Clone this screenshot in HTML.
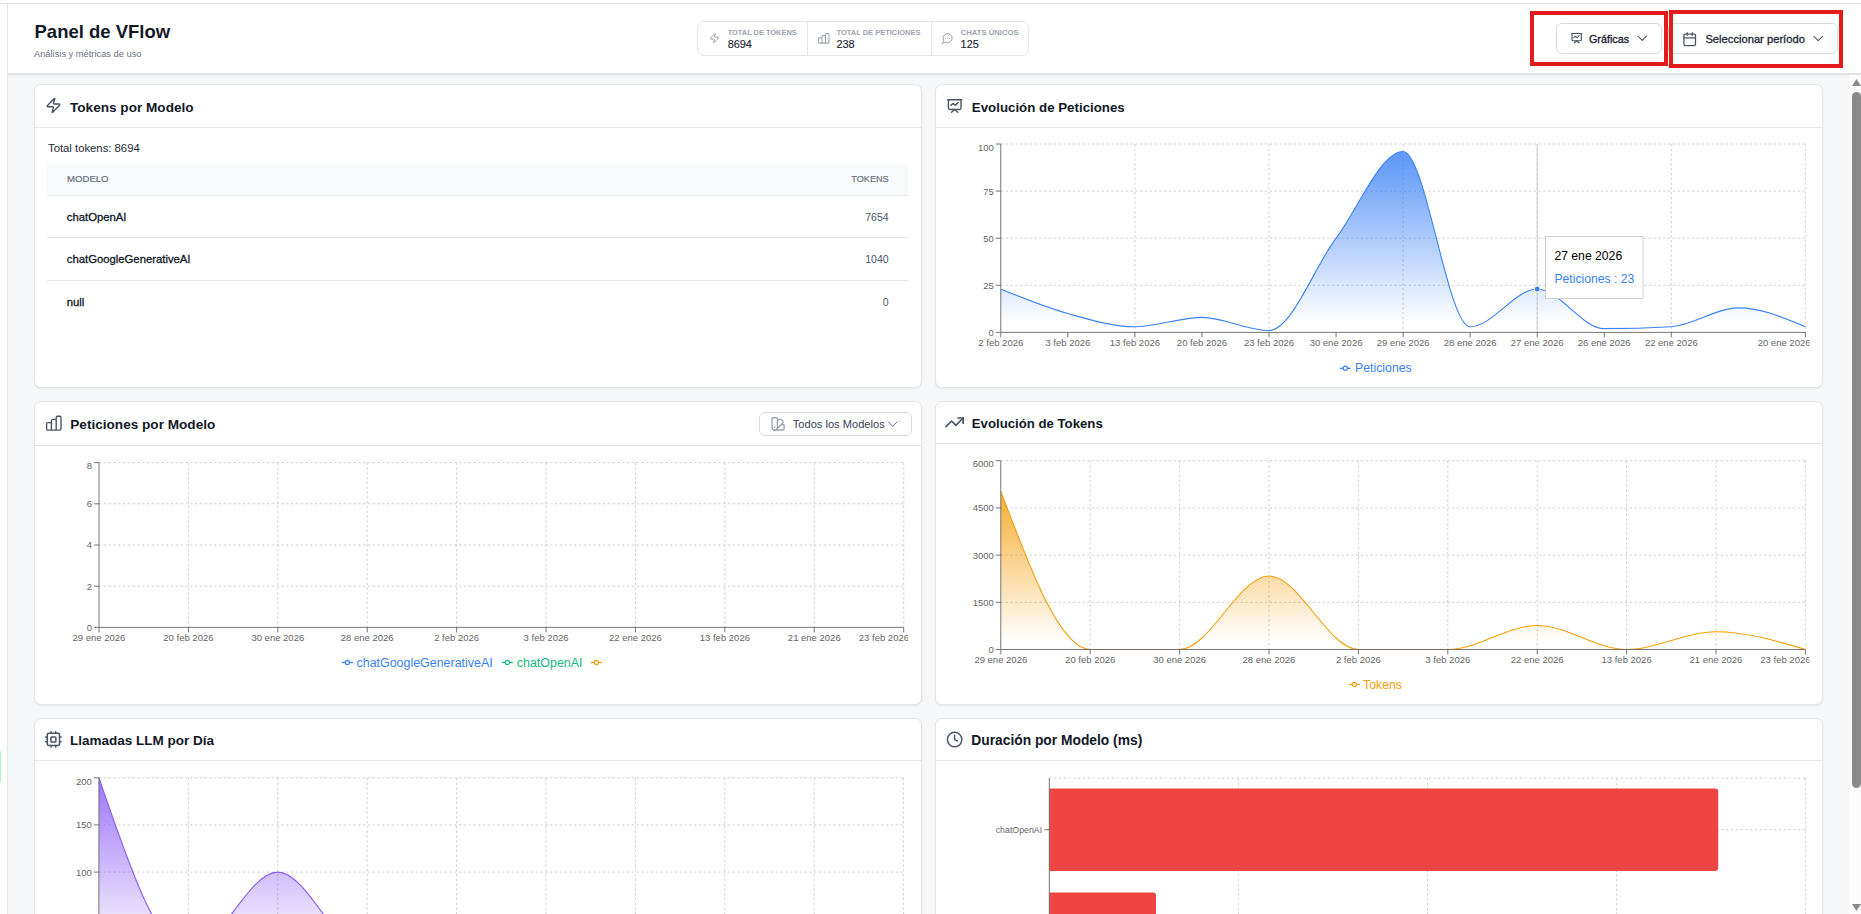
<!DOCTYPE html>
<html><head><meta charset="utf-8"><title>Panel de VFlow</title>
<style>
html,body{margin:0;padding:0;}
body{width:1861px;height:914px;overflow:hidden;position:relative;background:#fff;font-family:"Liberation Sans", sans-serif;}
svg text{font-family:"Liberation Sans", sans-serif;}
</style></head><body>
<div style="position:absolute;left:0px;top:3px;width:1861px;height:1px;background:#e2e4e2"></div><div style="position:absolute;left:7px;top:4px;width:1px;height:910px;background:#e5e7eb"></div><div style="position:absolute;left:8px;top:4px;width:1853px;height:70px;background:#fff"></div><div style="position:absolute;left:8px;top:74px;width:1841px;height:840px;background:#f6f7f9"></div><div style="position:absolute;left:8px;top:73px;width:1853px;height:2px;background:#e1e2e4"></div><div style="position:absolute;left:8px;top:75px;width:1841px;height:2px;background:linear-gradient(#eceef0,#f6f7f9)"></div><div style="position:absolute;left:0px;top:751px;width:1px;height:31px;background:#b0f5c8"></div><div style="position:absolute;left:1849px;top:75px;width:12px;height:839px;background:#fbfbfb"></div><div style="position:absolute;left:1852px;top:92px;width:9px;height:696px;background:#8a8a8a;border-radius:4.5px"></div><div style="position:absolute;left:697px;top:21px;width:332px;height:35px;border:1px solid #e3e5e8;border-radius:7px;box-sizing:border-box;background:#fff"></div><div style="position:absolute;left:807px;top:22px;width:1px;height:33px;background:#e3e5e8"></div><div style="position:absolute;left:931px;top:22px;width:1px;height:33px;background:#e3e5e8"></div><div style="position:absolute;left:1556px;top:23px;width:106px;height:31px;border:1px solid #d8dbe0;border-radius:6px;box-sizing:border-box;background:#fff"></div><div style="position:absolute;left:1668px;top:23px;width:170px;height:31px;border:1px solid #d8dbe0;border-radius:6px;box-sizing:border-box;background:#fff"></div><div style="position:absolute;left:1530px;top:11px;width:138px;height:55px;border:4px solid #e31b1b;box-sizing:border-box"></div><div style="position:absolute;left:1669px;top:10px;width:174px;height:58px;border:4px solid #e31b1b;box-sizing:border-box"></div><div style="position:absolute;left:34px;top:84px;width:888px;height:304px;background:#fff;border:1px solid #e3e5e8;border-radius:7px;box-sizing:border-box;box-shadow:0 1px 2px rgba(0,0,0,0.07)"></div><div style="position:absolute;left:35px;top:127px;width:886px;height:1px;background:#e5e7eb"></div><div style="position:absolute;left:935px;top:84px;width:888px;height:304px;background:#fff;border:1px solid #e3e5e8;border-radius:7px;box-sizing:border-box;box-shadow:0 1px 2px rgba(0,0,0,0.07)"></div><div style="position:absolute;left:936px;top:127px;width:886px;height:1px;background:#e5e7eb"></div><div style="position:absolute;left:34px;top:401px;width:888px;height:304px;background:#fff;border:1px solid #e3e5e8;border-radius:7px;box-sizing:border-box;box-shadow:0 1px 2px rgba(0,0,0,0.07)"></div><div style="position:absolute;left:35px;top:445px;width:886px;height:1px;background:#e5e7eb"></div><div style="position:absolute;left:935px;top:401px;width:888px;height:304px;background:#fff;border:1px solid #e3e5e8;border-radius:7px;box-sizing:border-box;box-shadow:0 1px 2px rgba(0,0,0,0.07)"></div><div style="position:absolute;left:936px;top:443px;width:886px;height:1px;background:#e5e7eb"></div><div style="position:absolute;left:34px;top:718px;width:888px;height:400px;background:#fff;border:1px solid #e3e5e8;border-radius:7px;box-sizing:border-box;box-shadow:0 1px 2px rgba(0,0,0,0.07)"></div><div style="position:absolute;left:35px;top:760px;width:886px;height:1px;background:#e5e7eb"></div><div style="position:absolute;left:935px;top:718px;width:888px;height:400px;background:#fff;border:1px solid #e3e5e8;border-radius:7px;box-sizing:border-box;box-shadow:0 1px 2px rgba(0,0,0,0.07)"></div><div style="position:absolute;left:936px;top:760px;width:886px;height:1px;background:#e5e7eb"></div><div style="position:absolute;left:47px;top:163px;width:861px;height:32px;background:#f9fafb"></div><div style="position:absolute;left:47px;top:195px;width:861px;height:1px;background:#e5e7eb"></div><div style="position:absolute;left:47px;top:237px;width:861px;height:1px;background:#e5e7eb"></div><div style="position:absolute;left:47px;top:280px;width:861px;height:1px;background:#e5e7eb"></div><div style="position:absolute;left:759px;top:411.5px;width:152.5px;height:24.5px;border:1px solid #d8dbe0;border-radius:6px;box-sizing:border-box;background:#fff"></div>
<svg width="1861" height="914" viewBox="0 0 1861 914" style="position:absolute;left:0;top:0">
<path d="M1852,86 L1856.5,79 L1861,86 Z" fill="#8a8a8a"/><path d="M1852,904 L1856.5,911 L1861,904 Z" fill="#8a8a8a"/><text x="34.5" y="38.2" font-size="18.5" fill="#111827" font-weight="700" text-anchor="start">Panel de VFlow</text><text x="34" y="57" font-size="9.3" fill="#6b7280" font-weight="400" text-anchor="start">Análisis y métricas de uso</text><text x="727.7" y="34.8" font-size="7.45" fill="#9ca3af" font-weight="700" text-anchor="start" textLength="69" lengthAdjust="spacingAndGlyphs">TOTAL DE TOKENS</text><text x="727.7" y="47.9" font-size="10.9" fill="#1f2937" font-weight="400" text-anchor="start" stroke="#1f2937" stroke-width="0.15">8694</text><text x="836.5" y="34.8" font-size="7.45" fill="#9ca3af" font-weight="700" text-anchor="start" textLength="84" lengthAdjust="spacingAndGlyphs">TOTAL DE PETICIONES</text><text x="836.5" y="47.9" font-size="10.9" fill="#1f2937" font-weight="400" text-anchor="start" stroke="#1f2937" stroke-width="0.15">238</text><text x="960.6" y="34.8" font-size="7.45" fill="#9ca3af" font-weight="700" text-anchor="start" textLength="58" lengthAdjust="spacingAndGlyphs">CHATS ÚNICOS</text><text x="960.6" y="47.9" font-size="10.9" fill="#1f2937" font-weight="400" text-anchor="start" stroke="#1f2937" stroke-width="0.15">125</text><g transform="translate(708.8,32.4) scale(0.4750)" fill="none" stroke="#9ca3af" stroke-width="2.1" stroke-linecap="round" stroke-linejoin="round"><path d="M4 14a1 1 0 0 1-.78-1.63l9.9-10.2a.5.5 0 0 1 .86.46l-1.92 6.02A1 1 0 0 0 13 10h7a1 1 0 0 1 .78 1.63l-9.9 10.2a.5.5 0 0 1-.86-.46l1.92-6.02A1 1 0 0 0 11 14z"/></g><path d="M818.6,42.2V38.7Q818.6,37.8 819.5,37.8H822.05M822.05,43.1V36.5Q822.05,35.6 822.95,35.6H824.6Q825.5,35.6 825.5,36.5M825.5,43.1V34.4Q825.5,33.5 826.4,33.5H828.05Q828.95,33.5 828.95,34.4V42.2Q828.95,43.1 828.05,43.1H819.5Q818.6,43.1 818.6,42.2M821.87,37.8Q822.05,37.8 822.05,38.7" fill="none" stroke="#9ca3af" stroke-width="1.05" stroke-linecap="round" stroke-linejoin="round"/><g transform="translate(941.6,32.2) scale(0.5000)" fill="none" stroke="#9ca3af" stroke-width="2" stroke-linecap="round" stroke-linejoin="round"><path d="M7.9 20A9 9 0 1 0 4 16.1L2 22Z"/><circle cx="8" cy="12.5" r="0.9" fill="#9ca3af" stroke="none"/><circle cx="12" cy="12.5" r="0.9" fill="#9ca3af" stroke="none"/><circle cx="16" cy="12.5" r="0.9" fill="#9ca3af" stroke="none"/></g><g transform="translate(1570.5,32) scale(0.5125)" fill="none" stroke="#4b5563" stroke-width="2.2" stroke-linecap="round" stroke-linejoin="round"><path d="M2 3h20"/><path d="M21 3v12a2 2 0 0 1-2 2H5a2 2 0 0 1-2-2V3"/><path d="m7.5 21 4.5-4 4.5 4"/><path d="M6.5 11 9.5 8.3 13 11 17 7"/></g><text x="1589" y="42.9" font-size="10.75" fill="#1f2937" font-weight="400" text-anchor="start" stroke="#1f2937" stroke-width="0.35">Gráficas</text><g transform="translate(1634.9,31) scale(0.6083)" fill="none" stroke="#4b5563" stroke-width="1.7" stroke-linecap="round" stroke-linejoin="round"><path d="m5 8.5 7 7 7-7"/></g><g transform="translate(1682,31.45) scale(0.6417)" fill="none" stroke="#4b5563" stroke-width="2" stroke-linecap="round" stroke-linejoin="round"><rect width="18" height="18" x="3" y="4" rx="2"/><path d="M8 2v4M16 2v4M3 10h18"/></g><text x="1705.4" y="43.1" font-size="11.2" fill="#1f2937" font-weight="400" text-anchor="start" stroke="#1f2937" stroke-width="0.32">Seleccionar período</text><g transform="translate(1810.9,31.3) scale(0.6083)" fill="none" stroke="#4b5563" stroke-width="1.7" stroke-linecap="round" stroke-linejoin="round"><path d="m5 8.5 7 7 7-7"/></g><text x="70" y="112" font-size="13.6" fill="#111827" font-weight="700" text-anchor="start">Tokens por Modelo</text><text x="971.8" y="112" font-size="13.3" fill="#111827" font-weight="700" text-anchor="start">Evolución de Peticiones</text><text x="70.3" y="429" font-size="13.6" fill="#111827" font-weight="700" text-anchor="start">Peticiones por Modelo</text><text x="971.8" y="428" font-size="13.2" fill="#111827" font-weight="700" text-anchor="start">Evolución de Tokens</text><text x="69.9" y="744.6" font-size="13.5" fill="#111827" font-weight="700" text-anchor="start">Llamadas LLM por Día</text><text x="971.3" y="744.6" font-size="13.8" fill="#111827" font-weight="700" text-anchor="start">Duración por Modelo (ms)</text><g transform="translate(45.06,97) scale(0.7000)" fill="none" stroke="#4b5563" stroke-width="2" stroke-linecap="round" stroke-linejoin="round"><path d="M4 14a1 1 0 0 1-.78-1.63l9.9-10.2a.5.5 0 0 1 .86.46l-1.92 6.02A1 1 0 0 0 13 10h7a1 1 0 0 1 .78 1.63l-9.9 10.2a.5.5 0 0 1-.86-.46l1.92-6.02A1 1 0 0 0 11 14z"/></g><g transform="translate(946.3,97.6) scale(0.7000)" fill="none" stroke="#4b5563" stroke-width="2" stroke-linecap="round" stroke-linejoin="round"><path d="M2 3h20"/><path d="M21 3v12a2 2 0 0 1-2 2H5a2 2 0 0 1-2-2V3"/><path d="m7.5 21 4.5-4 4.5 4"/><path d="M6.5 11 9.5 8.3 13 11 17 7"/></g><path d="M46.6,428.8V423.9Q46.6,422.6 47.9,422.6H51.4M51.4,430.1V420.7Q51.4,419.4 52.7,419.4H54.9Q56.2,419.4 56.2,420.7M56.2,430.1V417.6Q56.2,416.3 57.5,416.3H59.7Q61,416.3 61,417.6V428.8Q61,430.1 59.7,430.1H47.9Q46.6,430.1 46.6,428.8M51.14,422.6Q51.4,422.6 51.4,423.9" fill="none" stroke="#4b5563" stroke-width="1.4" stroke-linecap="round" stroke-linejoin="round"/><g transform="translate(944.3,412) scale(0.8583)" fill="none" stroke="#4b5563" stroke-width="2" stroke-linecap="round" stroke-linejoin="round"><path d="M22 7 13.5 15.5 8.5 10.5 2 17"/><path d="M16 7h6v6"/></g><g transform="translate(44.2,730.2) scale(0.7667)" fill="none" stroke="#4b5563" stroke-width="2" stroke-linecap="round" stroke-linejoin="round"><rect width="16" height="16" x="4" y="4" rx="2"/><rect width="6.5" height="6.5" x="8.75" y="8.75" rx="1"/><path d="M15 2v2M15 20v2M2 15h2M2 9h2M20 15h2M20 9h2M9 2v2M9 20v2"/></g><g transform="translate(945.98,730.9) scale(0.7208)" fill="none" stroke="#4b5563" stroke-width="2" stroke-linecap="round" stroke-linejoin="round"><circle cx="12" cy="12" r="10"/><path d="M12 6v6l4 2"/></g><text x="48" y="152" font-size="11.3" fill="#1f2937" font-weight="400" text-anchor="start">Total tokens: 8694</text><text x="67" y="182" font-size="9.6" fill="#6b7280" font-weight="400" text-anchor="start" stroke="#6b7280" stroke-width="0.2">MODELO</text><text x="888.6" y="182" font-size="9.1" fill="#6b7280" font-weight="400" text-anchor="end" stroke="#6b7280" stroke-width="0.2">TOKENS</text><text x="66.8" y="220.8" font-size="11.3" fill="#111827" font-weight="400" text-anchor="start" stroke="#111827" stroke-width="0.3">chatOpenAI</text><text x="888.6" y="220.8" font-size="10.5" fill="#4b5563" font-weight="400" text-anchor="end">7654</text><text x="66.8" y="262.8" font-size="11.3" fill="#111827" font-weight="400" text-anchor="start" stroke="#111827" stroke-width="0.3">chatGoogleGenerativeAI</text><text x="888.6" y="262.8" font-size="10.5" fill="#4b5563" font-weight="400" text-anchor="end">1040</text><text x="66.8" y="306.2" font-size="11.3" fill="#111827" font-weight="400" text-anchor="start" stroke="#111827" stroke-width="0.3">null</text><text x="888.6" y="306.2" font-size="10.5" fill="#4b5563" font-weight="400" text-anchor="end">0</text><defs>
<linearGradient id="gb" x1="0" y1="0" x2="0" y2="1"><stop offset="5%" stop-color="#3b82f6" stop-opacity="0.8"/><stop offset="95%" stop-color="#3b82f6" stop-opacity="0"/></linearGradient>
<linearGradient id="go" x1="0" y1="0" x2="0" y2="1"><stop offset="5%" stop-color="#f59e0b" stop-opacity="0.8"/><stop offset="95%" stop-color="#f59e0b" stop-opacity="0"/></linearGradient>
<linearGradient id="gp" x1="0" y1="0" x2="0" y2="1"><stop offset="5%" stop-color="#8b5cf6" stop-opacity="0.8"/><stop offset="95%" stop-color="#8b5cf6" stop-opacity="0"/></linearGradient>
<clipPath id="cp2"><rect x="936" y="128" width="873.5" height="259"/></clipPath>
<clipPath id="cp3"><rect x="35" y="446" width="873" height="258"/></clipPath>
<clipPath id="cp4"><rect x="936" y="444" width="873.5" height="260"/></clipPath>
<clipPath id="cp5"><rect x="35" y="761" width="886" height="153"/></clipPath>
<clipPath id="cp6"><rect x="936" y="761" width="886" height="153"/></clipPath>
</defs><g clip-path="url(#cp2)"><line x1="1000.8" y1="144" x2="1805.4" y2="144" stroke="#ccc" stroke-width="0.9" stroke-dasharray="2.4 2.4" fill="none"/><line x1="1000.8" y1="191.1" x2="1805.4" y2="191.1" stroke="#ccc" stroke-width="0.9" stroke-dasharray="2.4 2.4" fill="none"/><line x1="1000.8" y1="238.2" x2="1805.4" y2="238.2" stroke="#ccc" stroke-width="0.9" stroke-dasharray="2.4 2.4" fill="none"/><line x1="1000.8" y1="285.3" x2="1805.4" y2="285.3" stroke="#ccc" stroke-width="0.9" stroke-dasharray="2.4 2.4" fill="none"/><line x1="1134.9" y1="144" x2="1134.9" y2="332.4" stroke="#ccc" stroke-width="0.9" stroke-dasharray="2.4 2.4" fill="none"/><line x1="1269" y1="144" x2="1269" y2="332.4" stroke="#ccc" stroke-width="0.9" stroke-dasharray="2.4 2.4" fill="none"/><line x1="1403.1" y1="144" x2="1403.1" y2="332.4" stroke="#ccc" stroke-width="0.9" stroke-dasharray="2.4 2.4" fill="none"/><line x1="1537.2" y1="144" x2="1537.2" y2="332.4" stroke="#ccc" stroke-width="0.9" stroke-dasharray="2.4 2.4" fill="none"/><line x1="1671.3" y1="144" x2="1671.3" y2="332.4" stroke="#ccc" stroke-width="0.9" stroke-dasharray="2.4 2.4" fill="none"/><line x1="1805.4" y1="144" x2="1805.4" y2="332.4" stroke="#ccc" stroke-width="0.9" stroke-dasharray="2.4 2.4" fill="none"/><path d="M1000.8,289.07C1023.15,298.17,1045.5,307.28,1067.85,313.56C1090.2,319.84,1112.55,326.75,1134.9,326.75C1157.25,326.75,1179.6,317.33,1201.95,317.33C1224.3,317.33,1246.65,330.52,1269,330.52C1291.35,330.52,1313.7,268.03,1336.05,238.2C1358.4,208.37,1380.75,151.54,1403.1,151.54C1425.45,151.54,1447.8,326.75,1470.15,326.75C1492.5,326.75,1514.85,289.07,1537.2,289.07C1559.55,289.07,1581.9,328.63,1604.25,328.63C1626.6,328.63,1648.95,328,1671.3,326.75C1693.65,325.49,1716,307.91,1738.35,307.91C1760.7,307.91,1783.05,317.33,1805.4,326.75L1805.4,332.4L1000.8,332.4Z" fill="url(#gb)" stroke="none"/><path d="M1000.8,289.07C1023.15,298.17,1045.5,307.28,1067.85,313.56C1090.2,319.84,1112.55,326.75,1134.9,326.75C1157.25,326.75,1179.6,317.33,1201.95,317.33C1224.3,317.33,1246.65,330.52,1269,330.52C1291.35,330.52,1313.7,268.03,1336.05,238.2C1358.4,208.37,1380.75,151.54,1403.1,151.54C1425.45,151.54,1447.8,326.75,1470.15,326.75C1492.5,326.75,1514.85,289.07,1537.2,289.07C1559.55,289.07,1581.9,328.63,1604.25,328.63C1626.6,328.63,1648.95,328,1671.3,326.75C1693.65,325.49,1716,307.91,1738.35,307.91C1760.7,307.91,1783.05,317.33,1805.4,326.75" fill="none" stroke="#3b82f6" stroke-width="1.1"/><line x1="1537.2" y1="144" x2="1537.2" y2="332.4" stroke="#ccc"/><line x1="1000.8" y1="144" x2="1000.8" y2="332.4" stroke="#666" stroke-width="0.9"/><line x1="995.8" y1="144" x2="1000.8" y2="144" stroke="#666" stroke-width="0.9"/><text x="993.8" y="151.4" font-size="9.5" fill="#666" font-weight="400" text-anchor="end">100</text><line x1="995.8" y1="191.1" x2="1000.8" y2="191.1" stroke="#666" stroke-width="0.9"/><text x="993.8" y="194.5" font-size="9.5" fill="#666" font-weight="400" text-anchor="end">75</text><line x1="995.8" y1="238.2" x2="1000.8" y2="238.2" stroke="#666" stroke-width="0.9"/><text x="993.8" y="241.6" font-size="9.5" fill="#666" font-weight="400" text-anchor="end">50</text><line x1="995.8" y1="285.3" x2="1000.8" y2="285.3" stroke="#666" stroke-width="0.9"/><text x="993.8" y="288.7" font-size="9.5" fill="#666" font-weight="400" text-anchor="end">25</text><line x1="995.8" y1="332.4" x2="1000.8" y2="332.4" stroke="#666" stroke-width="0.9"/><text x="993.8" y="335.8" font-size="9.5" fill="#666" font-weight="400" text-anchor="end">0</text><line x1="1000.8" y1="332.4" x2="1805.4" y2="332.4" stroke="#666" stroke-width="0.9"/><line x1="1000.8" y1="332.4" x2="1000.8" y2="337.4" stroke="#666" stroke-width="0.9"/><text x="1000.8" y="346.2" font-size="9.5" fill="#666" font-weight="400" text-anchor="middle">2 feb 2026</text><line x1="1067.85" y1="332.4" x2="1067.85" y2="337.4" stroke="#666" stroke-width="0.9"/><text x="1067.85" y="346.2" font-size="9.5" fill="#666" font-weight="400" text-anchor="middle">3 feb 2026</text><line x1="1134.9" y1="332.4" x2="1134.9" y2="337.4" stroke="#666" stroke-width="0.9"/><text x="1134.9" y="346.2" font-size="9.5" fill="#666" font-weight="400" text-anchor="middle">13 feb 2026</text><line x1="1201.95" y1="332.4" x2="1201.95" y2="337.4" stroke="#666" stroke-width="0.9"/><text x="1201.95" y="346.2" font-size="9.5" fill="#666" font-weight="400" text-anchor="middle">20 feb 2026</text><line x1="1269" y1="332.4" x2="1269" y2="337.4" stroke="#666" stroke-width="0.9"/><text x="1269" y="346.2" font-size="9.5" fill="#666" font-weight="400" text-anchor="middle">23 feb 2026</text><line x1="1336.05" y1="332.4" x2="1336.05" y2="337.4" stroke="#666" stroke-width="0.9"/><text x="1336.05" y="346.2" font-size="9.5" fill="#666" font-weight="400" text-anchor="middle">30 ene 2026</text><line x1="1403.1" y1="332.4" x2="1403.1" y2="337.4" stroke="#666" stroke-width="0.9"/><text x="1403.1" y="346.2" font-size="9.5" fill="#666" font-weight="400" text-anchor="middle">29 ene 2026</text><line x1="1470.15" y1="332.4" x2="1470.15" y2="337.4" stroke="#666" stroke-width="0.9"/><text x="1470.15" y="346.2" font-size="9.5" fill="#666" font-weight="400" text-anchor="middle">28 ene 2026</text><line x1="1537.2" y1="332.4" x2="1537.2" y2="337.4" stroke="#666" stroke-width="0.9"/><text x="1537.2" y="346.2" font-size="9.5" fill="#666" font-weight="400" text-anchor="middle">27 ene 2026</text><line x1="1604.25" y1="332.4" x2="1604.25" y2="337.4" stroke="#666" stroke-width="0.9"/><text x="1604.25" y="346.2" font-size="9.5" fill="#666" font-weight="400" text-anchor="middle">26 ene 2026</text><line x1="1671.3" y1="332.4" x2="1671.3" y2="337.4" stroke="#666" stroke-width="0.9"/><text x="1671.3" y="346.2" font-size="9.5" fill="#666" font-weight="400" text-anchor="middle">22 ene 2026</text><line x1="1805.4" y1="332.4" x2="1805.4" y2="337.4" stroke="#666" stroke-width="0.9"/><text x="1810.5" y="346.2" font-size="9.5" fill="#666" font-weight="400" text-anchor="end">20 ene 2026</text><circle cx="1537.2" cy="289.07" r="3" fill="#3b82f6" stroke="#fff" stroke-width="1"/></g><rect x="1545.5" y="236.5" width="97.5" height="62" fill="#fff" stroke="#ccc" stroke-width="0.9"/><text x="1554.4" y="260.3" font-size="12.2" fill="#000" font-weight="400" text-anchor="start">27 ene 2026</text><text x="1554.4" y="283" font-size="12.2" fill="#3b82f6" font-weight="400" text-anchor="start">Peticiones : 23</text><line x1="1340" y1="368.3" x2="1350.8" y2="368.3" stroke="#3b82f6" stroke-width="1.3"/><circle cx="1345.4" cy="368.3" r="2.1" fill="#fff" stroke="#3b82f6" stroke-width="1.2"/><text x="1355" y="371.8" font-size="12.3" fill="#3b82f6" font-weight="400" text-anchor="start">Peticiones</text><g clip-path="url(#cp3)"><line x1="99" y1="462.6" x2="903.69" y2="462.6" stroke="#ccc" stroke-width="0.9" stroke-dasharray="2.4 2.4" fill="none"/><line x1="99" y1="503.8" x2="903.69" y2="503.8" stroke="#ccc" stroke-width="0.9" stroke-dasharray="2.4 2.4" fill="none"/><line x1="99" y1="545" x2="903.69" y2="545" stroke="#ccc" stroke-width="0.9" stroke-dasharray="2.4 2.4" fill="none"/><line x1="99" y1="586.2" x2="903.69" y2="586.2" stroke="#ccc" stroke-width="0.9" stroke-dasharray="2.4 2.4" fill="none"/><line x1="188.41" y1="462.6" x2="188.41" y2="627.4" stroke="#ccc" stroke-width="0.9" stroke-dasharray="2.4 2.4" fill="none"/><line x1="277.82" y1="462.6" x2="277.82" y2="627.4" stroke="#ccc" stroke-width="0.9" stroke-dasharray="2.4 2.4" fill="none"/><line x1="367.23" y1="462.6" x2="367.23" y2="627.4" stroke="#ccc" stroke-width="0.9" stroke-dasharray="2.4 2.4" fill="none"/><line x1="456.64" y1="462.6" x2="456.64" y2="627.4" stroke="#ccc" stroke-width="0.9" stroke-dasharray="2.4 2.4" fill="none"/><line x1="546.05" y1="462.6" x2="546.05" y2="627.4" stroke="#ccc" stroke-width="0.9" stroke-dasharray="2.4 2.4" fill="none"/><line x1="635.46" y1="462.6" x2="635.46" y2="627.4" stroke="#ccc" stroke-width="0.9" stroke-dasharray="2.4 2.4" fill="none"/><line x1="724.87" y1="462.6" x2="724.87" y2="627.4" stroke="#ccc" stroke-width="0.9" stroke-dasharray="2.4 2.4" fill="none"/><line x1="814.28" y1="462.6" x2="814.28" y2="627.4" stroke="#ccc" stroke-width="0.9" stroke-dasharray="2.4 2.4" fill="none"/><line x1="903.69" y1="462.6" x2="903.69" y2="627.4" stroke="#ccc" stroke-width="0.9" stroke-dasharray="2.4 2.4" fill="none"/><line x1="99" y1="462.6" x2="99" y2="627.4" stroke="#666" stroke-width="0.9"/><line x1="94" y1="462.6" x2="99" y2="462.6" stroke="#666" stroke-width="0.9"/><text x="92" y="469" font-size="9.5" fill="#666" font-weight="400" text-anchor="end">8</text><line x1="94" y1="503.8" x2="99" y2="503.8" stroke="#666" stroke-width="0.9"/><text x="92" y="507.2" font-size="9.5" fill="#666" font-weight="400" text-anchor="end">6</text><line x1="94" y1="545" x2="99" y2="545" stroke="#666" stroke-width="0.9"/><text x="92" y="548.4" font-size="9.5" fill="#666" font-weight="400" text-anchor="end">4</text><line x1="94" y1="586.2" x2="99" y2="586.2" stroke="#666" stroke-width="0.9"/><text x="92" y="589.6" font-size="9.5" fill="#666" font-weight="400" text-anchor="end">2</text><line x1="94" y1="627.4" x2="99" y2="627.4" stroke="#666" stroke-width="0.9"/><text x="92" y="630.8" font-size="9.5" fill="#666" font-weight="400" text-anchor="end">0</text><line x1="99" y1="627.4" x2="903.69" y2="627.4" stroke="#666" stroke-width="0.9"/><line x1="99" y1="627.4" x2="99" y2="632.4" stroke="#666" stroke-width="0.9"/><text x="99" y="641.2" font-size="9.5" fill="#666" font-weight="400" text-anchor="middle">29 ene 2026</text><line x1="188.41" y1="627.4" x2="188.41" y2="632.4" stroke="#666" stroke-width="0.9"/><text x="188.41" y="641.2" font-size="9.5" fill="#666" font-weight="400" text-anchor="middle">20 feb 2026</text><line x1="277.82" y1="627.4" x2="277.82" y2="632.4" stroke="#666" stroke-width="0.9"/><text x="277.82" y="641.2" font-size="9.5" fill="#666" font-weight="400" text-anchor="middle">30 ene 2026</text><line x1="367.23" y1="627.4" x2="367.23" y2="632.4" stroke="#666" stroke-width="0.9"/><text x="367.23" y="641.2" font-size="9.5" fill="#666" font-weight="400" text-anchor="middle">28 ene 2026</text><line x1="456.64" y1="627.4" x2="456.64" y2="632.4" stroke="#666" stroke-width="0.9"/><text x="456.64" y="641.2" font-size="9.5" fill="#666" font-weight="400" text-anchor="middle">2 feb 2026</text><line x1="546.05" y1="627.4" x2="546.05" y2="632.4" stroke="#666" stroke-width="0.9"/><text x="546.05" y="641.2" font-size="9.5" fill="#666" font-weight="400" text-anchor="middle">3 feb 2026</text><line x1="635.46" y1="627.4" x2="635.46" y2="632.4" stroke="#666" stroke-width="0.9"/><text x="635.46" y="641.2" font-size="9.5" fill="#666" font-weight="400" text-anchor="middle">22 ene 2026</text><line x1="724.87" y1="627.4" x2="724.87" y2="632.4" stroke="#666" stroke-width="0.9"/><text x="724.87" y="641.2" font-size="9.5" fill="#666" font-weight="400" text-anchor="middle">13 feb 2026</text><line x1="814.28" y1="627.4" x2="814.28" y2="632.4" stroke="#666" stroke-width="0.9"/><text x="814.28" y="641.2" font-size="9.5" fill="#666" font-weight="400" text-anchor="middle">21 ene 2026</text><line x1="903.69" y1="627.4" x2="903.69" y2="632.4" stroke="#666" stroke-width="0.9"/><text x="909" y="641.2" font-size="9.5" fill="#666" font-weight="400" text-anchor="end">23 feb 2026</text></g><line x1="342" y1="662.5" x2="352.8" y2="662.5" stroke="#3b82f6" stroke-width="1.3"/><circle cx="347.4" cy="662.5" r="2.1" fill="#fff" stroke="#3b82f6" stroke-width="1.2"/><text x="356.5" y="666.5" font-size="12.45" fill="#3b82f6" font-weight="400" text-anchor="start">chatGoogleGenerativeAI</text><line x1="502" y1="662.5" x2="512.8" y2="662.5" stroke="#10b981" stroke-width="1.3"/><circle cx="507.4" cy="662.5" r="2.1" fill="#fff" stroke="#10b981" stroke-width="1.2"/><text x="516.8" y="666.5" font-size="12.45" fill="#10b981" font-weight="400" text-anchor="start">chatOpenAI</text><line x1="591" y1="662.5" x2="601.8" y2="662.5" stroke="#f59e0b" stroke-width="1.3"/><circle cx="596.4" cy="662.5" r="2.1" fill="#fff" stroke="#f59e0b" stroke-width="1.2"/><g transform="translate(769.95,415.7) scale(0.6792)" fill="none" stroke="#9ca3af" stroke-width="2" stroke-linecap="round" stroke-linejoin="round"><path d="M11 17a4 4 0 0 1-8 0V5a2 2 0 0 1 2-2h4a2 2 0 0 1 2 2Z"/><path d="M16.7 13H19a2 2 0 0 1 2 2v4a2 2 0 0 1-2 2H7"/><path d="M7 17h.01"/><path d="m11 8 2.3-2.3a2.4 2.4 0 0 1 3.404.004L18.6 7.6a2.4 2.4 0 0 1 .026 3.434L9.9 19.8"/></g><text x="792.8" y="428" font-size="11.1" fill="#374151" font-weight="400" text-anchor="start">Todos los Modelos</text><g transform="translate(885,416.3) scale(0.6458)" fill="none" stroke="#6b7280" stroke-width="1.5" stroke-linecap="round" stroke-linejoin="round"><path d="m5 8.5 7 7 7-7"/></g><g clip-path="url(#cp4)"><line x1="1000.8" y1="460.7" x2="1805.4" y2="460.7" stroke="#ccc" stroke-width="0.9" stroke-dasharray="2.4 2.4" fill="none"/><line x1="1000.8" y1="507.9" x2="1805.4" y2="507.9" stroke="#ccc" stroke-width="0.9" stroke-dasharray="2.4 2.4" fill="none"/><line x1="1000.8" y1="555.1" x2="1805.4" y2="555.1" stroke="#ccc" stroke-width="0.9" stroke-dasharray="2.4 2.4" fill="none"/><line x1="1000.8" y1="602.3" x2="1805.4" y2="602.3" stroke="#ccc" stroke-width="0.9" stroke-dasharray="2.4 2.4" fill="none"/><line x1="1090.2" y1="460.7" x2="1090.2" y2="649.5" stroke="#ccc" stroke-width="0.9" stroke-dasharray="2.4 2.4" fill="none"/><line x1="1179.6" y1="460.7" x2="1179.6" y2="649.5" stroke="#ccc" stroke-width="0.9" stroke-dasharray="2.4 2.4" fill="none"/><line x1="1269" y1="460.7" x2="1269" y2="649.5" stroke="#ccc" stroke-width="0.9" stroke-dasharray="2.4 2.4" fill="none"/><line x1="1358.4" y1="460.7" x2="1358.4" y2="649.5" stroke="#ccc" stroke-width="0.9" stroke-dasharray="2.4 2.4" fill="none"/><line x1="1447.8" y1="460.7" x2="1447.8" y2="649.5" stroke="#ccc" stroke-width="0.9" stroke-dasharray="2.4 2.4" fill="none"/><line x1="1537.2" y1="460.7" x2="1537.2" y2="649.5" stroke="#ccc" stroke-width="0.9" stroke-dasharray="2.4 2.4" fill="none"/><line x1="1626.6" y1="460.7" x2="1626.6" y2="649.5" stroke="#ccc" stroke-width="0.9" stroke-dasharray="2.4 2.4" fill="none"/><line x1="1716" y1="460.7" x2="1716" y2="649.5" stroke="#ccc" stroke-width="0.9" stroke-dasharray="2.4 2.4" fill="none"/><line x1="1805.4" y1="460.7" x2="1805.4" y2="649.5" stroke="#ccc" stroke-width="0.9" stroke-dasharray="2.4 2.4" fill="none"/><path d="M1000.8,491.35C1030.6,570.42,1060.4,649.5,1090.2,649.5C1120,649.5,1149.8,649.5,1179.6,649.5C1209.4,649.5,1239.2,575.96,1269,575.96C1298.8,575.96,1328.6,649.5,1358.4,649.5C1388.2,649.5,1418,649.5,1447.8,649.5C1477.6,649.5,1507.4,625.43,1537.2,625.43C1567,625.43,1596.8,649.5,1626.6,649.5C1656.4,649.5,1686.2,631.69,1716,631.69C1745.8,631.69,1775.6,640.59,1805.4,649.5L1805.4,649.5L1000.8,649.5Z" fill="url(#go)" stroke="none"/><path d="M1000.8,491.35C1030.6,570.42,1060.4,649.5,1090.2,649.5C1120,649.5,1149.8,649.5,1179.6,649.5C1209.4,649.5,1239.2,575.96,1269,575.96C1298.8,575.96,1328.6,649.5,1358.4,649.5C1388.2,649.5,1418,649.5,1447.8,649.5C1477.6,649.5,1507.4,625.43,1537.2,625.43C1567,625.43,1596.8,649.5,1626.6,649.5C1656.4,649.5,1686.2,631.69,1716,631.69C1745.8,631.69,1775.6,640.59,1805.4,649.5" fill="none" stroke="#f59e0b" stroke-width="1.1"/><line x1="1000.8" y1="460.7" x2="1000.8" y2="649.5" stroke="#666" stroke-width="0.9"/><line x1="995.8" y1="460.7" x2="1000.8" y2="460.7" stroke="#666" stroke-width="0.9"/><text x="993.8" y="467.1" font-size="9.5" fill="#666" font-weight="400" text-anchor="end">6000</text><line x1="995.8" y1="507.9" x2="1000.8" y2="507.9" stroke="#666" stroke-width="0.9"/><text x="993.8" y="511.3" font-size="9.5" fill="#666" font-weight="400" text-anchor="end">4500</text><line x1="995.8" y1="555.1" x2="1000.8" y2="555.1" stroke="#666" stroke-width="0.9"/><text x="993.8" y="558.5" font-size="9.5" fill="#666" font-weight="400" text-anchor="end">3000</text><line x1="995.8" y1="602.3" x2="1000.8" y2="602.3" stroke="#666" stroke-width="0.9"/><text x="993.8" y="605.7" font-size="9.5" fill="#666" font-weight="400" text-anchor="end">1500</text><line x1="995.8" y1="649.5" x2="1000.8" y2="649.5" stroke="#666" stroke-width="0.9"/><text x="993.8" y="652.9" font-size="9.5" fill="#666" font-weight="400" text-anchor="end">0</text><line x1="1000.8" y1="649.5" x2="1805.4" y2="649.5" stroke="#666" stroke-width="0.9"/><line x1="1000.8" y1="649.5" x2="1000.8" y2="654.5" stroke="#666" stroke-width="0.9"/><text x="1000.8" y="663.3" font-size="9.5" fill="#666" font-weight="400" text-anchor="middle">29 ene 2026</text><line x1="1090.2" y1="649.5" x2="1090.2" y2="654.5" stroke="#666" stroke-width="0.9"/><text x="1090.2" y="663.3" font-size="9.5" fill="#666" font-weight="400" text-anchor="middle">20 feb 2026</text><line x1="1179.6" y1="649.5" x2="1179.6" y2="654.5" stroke="#666" stroke-width="0.9"/><text x="1179.6" y="663.3" font-size="9.5" fill="#666" font-weight="400" text-anchor="middle">30 ene 2026</text><line x1="1269" y1="649.5" x2="1269" y2="654.5" stroke="#666" stroke-width="0.9"/><text x="1269" y="663.3" font-size="9.5" fill="#666" font-weight="400" text-anchor="middle">28 ene 2026</text><line x1="1358.4" y1="649.5" x2="1358.4" y2="654.5" stroke="#666" stroke-width="0.9"/><text x="1358.4" y="663.3" font-size="9.5" fill="#666" font-weight="400" text-anchor="middle">2 feb 2026</text><line x1="1447.8" y1="649.5" x2="1447.8" y2="654.5" stroke="#666" stroke-width="0.9"/><text x="1447.8" y="663.3" font-size="9.5" fill="#666" font-weight="400" text-anchor="middle">3 feb 2026</text><line x1="1537.2" y1="649.5" x2="1537.2" y2="654.5" stroke="#666" stroke-width="0.9"/><text x="1537.2" y="663.3" font-size="9.5" fill="#666" font-weight="400" text-anchor="middle">22 ene 2026</text><line x1="1626.6" y1="649.5" x2="1626.6" y2="654.5" stroke="#666" stroke-width="0.9"/><text x="1626.6" y="663.3" font-size="9.5" fill="#666" font-weight="400" text-anchor="middle">13 feb 2026</text><line x1="1716" y1="649.5" x2="1716" y2="654.5" stroke="#666" stroke-width="0.9"/><text x="1716" y="663.3" font-size="9.5" fill="#666" font-weight="400" text-anchor="middle">21 ene 2026</text><line x1="1805.4" y1="649.5" x2="1805.4" y2="654.5" stroke="#666" stroke-width="0.9"/><text x="1810.5" y="663.3" font-size="9.5" fill="#666" font-weight="400" text-anchor="end">23 feb 2026</text></g><line x1="1349" y1="684.5" x2="1359.8" y2="684.5" stroke="#f59e0b" stroke-width="1.3"/><circle cx="1354.4" cy="684.5" r="2.1" fill="#fff" stroke="#f59e0b" stroke-width="1.2"/><text x="1363" y="688.5" font-size="12.3" fill="#f59e0b" font-weight="400" text-anchor="start">Tokens</text><g clip-path="url(#cp5)"><line x1="98.9" y1="777.8" x2="903.59" y2="777.8" stroke="#ccc" stroke-width="0.9" stroke-dasharray="2.4 2.4" fill="none"/><line x1="98.9" y1="824.95" x2="903.59" y2="824.95" stroke="#ccc" stroke-width="0.9" stroke-dasharray="2.4 2.4" fill="none"/><line x1="98.9" y1="872.1" x2="903.59" y2="872.1" stroke="#ccc" stroke-width="0.9" stroke-dasharray="2.4 2.4" fill="none"/><line x1="98.9" y1="919.25" x2="903.59" y2="919.25" stroke="#ccc" stroke-width="0.9" stroke-dasharray="2.4 2.4" fill="none"/><line x1="98.9" y1="966.4" x2="903.59" y2="966.4" stroke="#ccc" stroke-width="0.9" stroke-dasharray="2.4 2.4" fill="none"/><line x1="188.31" y1="777.8" x2="188.31" y2="966.4" stroke="#ccc" stroke-width="0.9" stroke-dasharray="2.4 2.4" fill="none"/><line x1="277.72" y1="777.8" x2="277.72" y2="966.4" stroke="#ccc" stroke-width="0.9" stroke-dasharray="2.4 2.4" fill="none"/><line x1="367.13" y1="777.8" x2="367.13" y2="966.4" stroke="#ccc" stroke-width="0.9" stroke-dasharray="2.4 2.4" fill="none"/><line x1="456.54" y1="777.8" x2="456.54" y2="966.4" stroke="#ccc" stroke-width="0.9" stroke-dasharray="2.4 2.4" fill="none"/><line x1="545.95" y1="777.8" x2="545.95" y2="966.4" stroke="#ccc" stroke-width="0.9" stroke-dasharray="2.4 2.4" fill="none"/><line x1="635.36" y1="777.8" x2="635.36" y2="966.4" stroke="#ccc" stroke-width="0.9" stroke-dasharray="2.4 2.4" fill="none"/><line x1="724.77" y1="777.8" x2="724.77" y2="966.4" stroke="#ccc" stroke-width="0.9" stroke-dasharray="2.4 2.4" fill="none"/><line x1="814.18" y1="777.8" x2="814.18" y2="966.4" stroke="#ccc" stroke-width="0.9" stroke-dasharray="2.4 2.4" fill="none"/><line x1="903.59" y1="777.8" x2="903.59" y2="966.4" stroke="#ccc" stroke-width="0.9" stroke-dasharray="2.4 2.4" fill="none"/><path d="M98.9,777.8C128.7,865.03,158.51,952.25,188.31,952.25C218.11,952.25,247.92,872.1,277.72,872.1C307.52,872.1,337.33,952.25,367.13,957.91C396.93,963.57,426.74,966.4,456.54,966.4C486.34,966.4,516.15,966.4,545.95,966.4C575.75,966.4,605.56,966.4,635.36,966.4C665.16,966.4,694.97,966.4,724.77,966.4C754.57,966.4,784.38,966.4,814.18,966.4C843.98,966.4,873.79,966.4,903.59,966.4L903.59,966.4L98.9,966.4Z" fill="url(#gp)" stroke="none"/><path d="M98.9,777.8C128.7,865.03,158.51,952.25,188.31,952.25C218.11,952.25,247.92,872.1,277.72,872.1C307.52,872.1,337.33,952.25,367.13,957.91C396.93,963.57,426.74,966.4,456.54,966.4C486.34,966.4,516.15,966.4,545.95,966.4C575.75,966.4,605.56,966.4,635.36,966.4C665.16,966.4,694.97,966.4,724.77,966.4C754.57,966.4,784.38,966.4,814.18,966.4C843.98,966.4,873.79,966.4,903.59,966.4" fill="none" stroke="#8b5cf6" stroke-width="1.1"/><line x1="98.9" y1="777.8" x2="98.9" y2="966.4" stroke="#666" stroke-width="0.9"/><line x1="93.9" y1="777.8" x2="98.9" y2="777.8" stroke="#666" stroke-width="0.9"/><text x="91.9" y="785.2" font-size="9.5" fill="#666" font-weight="400" text-anchor="end">200</text><line x1="93.9" y1="824.95" x2="98.9" y2="824.95" stroke="#666" stroke-width="0.9"/><text x="91.9" y="828.35" font-size="9.5" fill="#666" font-weight="400" text-anchor="end">150</text><line x1="93.9" y1="872.1" x2="98.9" y2="872.1" stroke="#666" stroke-width="0.9"/><text x="91.9" y="875.5" font-size="9.5" fill="#666" font-weight="400" text-anchor="end">100</text><line x1="93.9" y1="919.25" x2="98.9" y2="919.25" stroke="#666" stroke-width="0.9"/><text x="91.9" y="922.65" font-size="9.5" fill="#666" font-weight="400" text-anchor="end">50</text><line x1="93.9" y1="966.4" x2="98.9" y2="966.4" stroke="#666" stroke-width="0.9"/><text x="91.9" y="969.8" font-size="9.5" fill="#666" font-weight="400" text-anchor="end">0</text></g><g clip-path="url(#cp6)"><line x1="1049.3" y1="778.2" x2="1805.7" y2="778.2" stroke="#ccc" stroke-width="0.9" stroke-dasharray="2.4 2.4" fill="none"/><line x1="1049.3" y1="829.7" x2="1805.7" y2="829.7" stroke="#ccc" stroke-width="0.9" stroke-dasharray="2.4 2.4" fill="none"/><line x1="1049.3" y1="932.7" x2="1805.7" y2="932.7" stroke="#ccc" stroke-width="0.9" stroke-dasharray="2.4 2.4" fill="none"/><line x1="1238.4" y1="778.2" x2="1238.4" y2="914" stroke="#ccc" stroke-width="0.9" stroke-dasharray="2.4 2.4" fill="none"/><line x1="1427.5" y1="778.2" x2="1427.5" y2="914" stroke="#ccc" stroke-width="0.9" stroke-dasharray="2.4 2.4" fill="none"/><line x1="1616.6" y1="778.2" x2="1616.6" y2="914" stroke="#ccc" stroke-width="0.9" stroke-dasharray="2.4 2.4" fill="none"/><line x1="1805.7" y1="778.2" x2="1805.7" y2="914" stroke="#ccc" stroke-width="0.9" stroke-dasharray="2.4 2.4" fill="none"/><path d="M1049.3,788.6H1715.2a3,3 0 0 1 3,3V868a3,3 0 0 1 -3,3H1049.3Z" fill="#ef4444"/><path d="M1049.3,892.5H1153a3,3 0 0 1 3,3V975H1049.3Z" fill="#ef4444"/><line x1="1049.3" y1="778.2" x2="1049.3" y2="914" stroke="#666" stroke-width="0.9"/><line x1="1044.3" y1="829.7" x2="1049.3" y2="829.7" stroke="#666" stroke-width="0.9"/><text x="1042.2" y="832.8" font-size="8.8" fill="#666" font-weight="400" text-anchor="end">chatOpenAI</text></g>
</svg>
</body></html>
